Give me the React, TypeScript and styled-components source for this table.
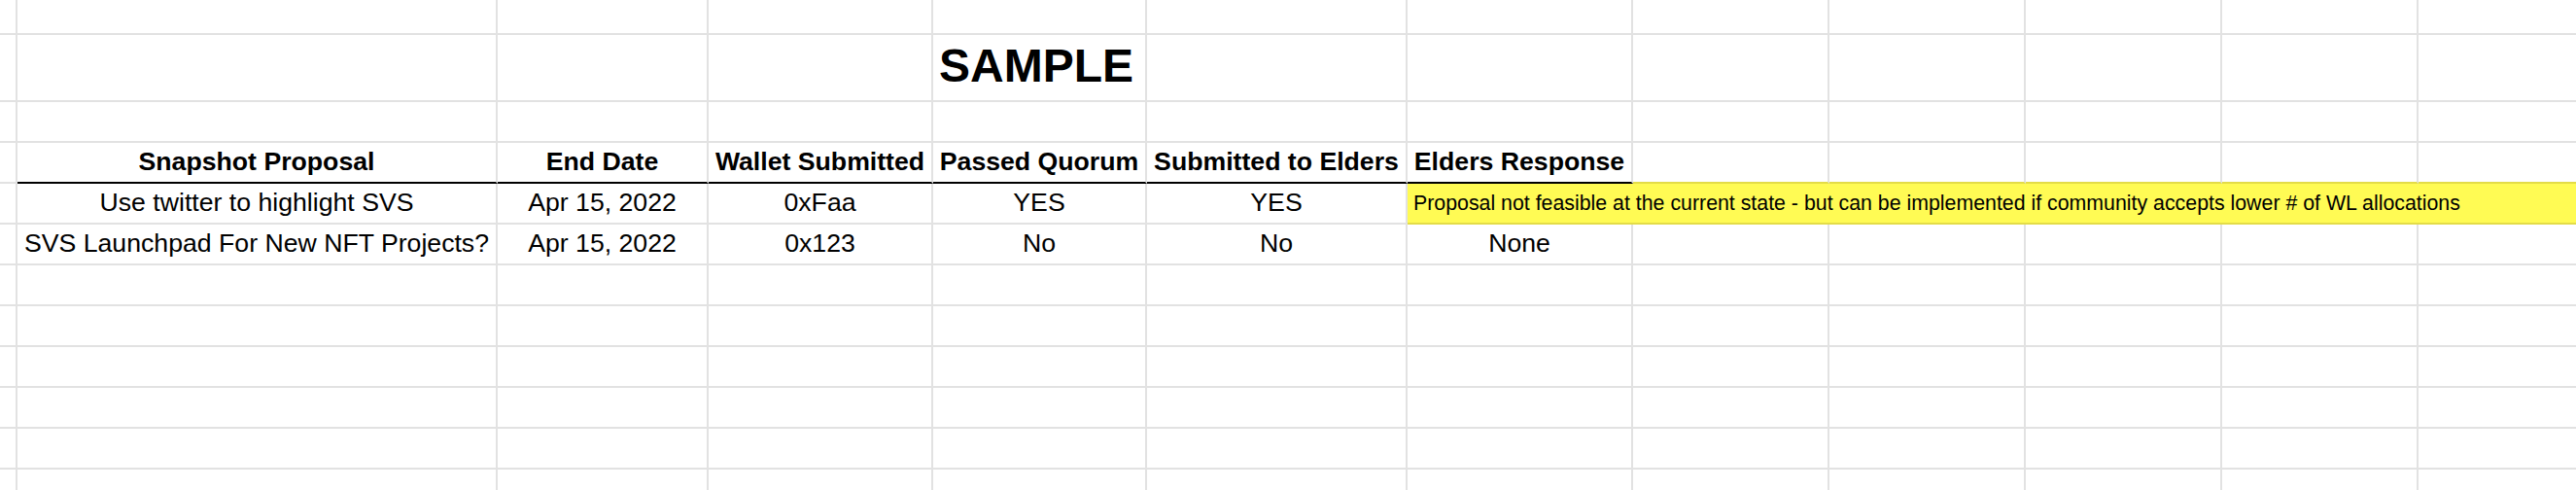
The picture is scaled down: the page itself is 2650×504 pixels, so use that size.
import styled, { createGlobalStyle } from 'styled-components';

const GRID = '#e2e2e2';
const YELLOW = '#fffb54';
const YELLOW_LINE = '#e3dc48';

const COL_WIDTHS = [18, 494, 217, 231, 220, 268, 232, 202, 202, 202, 202, 202];
const ROW_HEIGHTS = [36, 69, 42, 42, 42, 42, 42, 42, 42, 42, 42, 42];

const HEADERS = [
  'Snapshot Proposal',
  'End Date',
  'Wallet Submitted',
  'Passed Quorum',
  'Submitted to Elders',
  'Elders Response',
];

const PROPOSALS = [
  {
    id: 1,
    values: ['Use twitter to highlight SVS', 'Apr 15, 2022', '0xFaa', 'YES', 'YES'],
    response: null,
    note: 'Proposal not feasible at the current state - but can be implemented if community accepts lower # of WL allocations',
  },
  {
    id: 2,
    values: ['SVS Launchpad For New NFT Projects?', 'Apr 15, 2022', '0x123', 'No', 'No'],
    response: 'None',
    note: null,
  },
];

const EMPTY_ROWS = 7;

const GlobalStyle = createGlobalStyle`
  html, body {
    margin: 0;
    padding: 0;
    background: #ffffff;
  }
  body {
    font-family: 'Liberation Sans', Arial, sans-serif;
    color: #000000;
  }
`;

const Page = styled.div`
  width: 2650px;
  height: 504px;
  overflow: hidden;
  background: #ffffff;
`;

const Sheet = styled.div`
  display: grid;
  grid-template-columns: ${COL_WIDTHS.map(w => `${w}px`).join(' ')};
  grid-template-rows: ${ROW_HEIGHTS.map(h => `${h}px`).join(' ')};
  width: max-content;
`;

type Line = 'grid' | 'black' | 'yellow';

const lineColor = (line?: Line) =>
  line === 'black' ? '#000000' : line === 'yellow' ? YELLOW_LINE : GRID;

const Cell = styled.div<{ $align?: 'left' | 'center'; $bold?: boolean; $bottom?: Line }>`
  box-sizing: border-box;
  display: flex;
  align-items: flex-end;
  justify-content: ${p => (p.$align === 'center' ? 'center' : 'flex-start')};
  padding: 0 6px 5px;
  border-right: 2px solid ${GRID};
  border-bottom: 2px solid ${p => lineColor(p.$bottom)};
  font-size: 26.67px;
  font-weight: ${p => (p.$bold ? 700 : 400)};
  white-space: nowrap;
  min-width: 0;
`;

const NoteCell = styled.div`
  box-sizing: border-box;
  grid-column: 7 / -1;
  display: flex;
  align-items: flex-end;
  padding: 0 6px 7px;
  background: ${YELLOW};
  border-bottom: 2px solid ${YELLOW_LINE};
  font-size: 21.33px;
  white-space: nowrap;
`;

const Title = styled.span`
  margin-bottom: 3px;
  font-size: 48px;
  font-weight: 700;
`;

const blankCells = (from: number, bottom?: Line) =>
  COL_WIDTHS.slice(from).map((_, i) => <Cell key={`b${from + i}`} $bottom={bottom} />);

const App = () => {
  return (
    <Page>
      <GlobalStyle />
      <Sheet>
        {/* top partial row */}
        {blankCells(0)}

        {/* title row */}
        <Cell />
        <Cell />
        <Cell />
        <Cell />
        <Cell>
          <Title>SAMPLE</Title>
        </Cell>
        {blankCells(5)}

        {/* spacer row */}
        {blankCells(0)}

        {/* header row */}
        <Cell />
        {HEADERS.map(title => (
          <Cell key={title} $align="center" $bold $bottom="black">
            {title}
          </Cell>
        ))}
        {blankCells(7, 'yellow')}

        {PROPOSALS.map(({ id, values, response, note }) => [
          <Cell key={`${id}-0`} />,
          ...values.map((value, i) => (
            <Cell key={`${id}-v${i}`} $align="center">
              {value}
            </Cell>
          )),
          note ? (
            <NoteCell key={`${id}-note`}>{note}</NoteCell>
          ) : (
            [
              <Cell key={`${id}-r`} $align="center">
                {response}
              </Cell>,
              ...COL_WIDTHS.slice(7).map((_, i) => <Cell key={`${id}-e${i}`} />),
            ]
          ),
        ])}

        {Array.from({ length: EMPTY_ROWS }).map((_, r) =>
          COL_WIDTHS.map((_, c) => <Cell key={`e${r}-${c}`} />)
        )}
      </Sheet>
    </Page>
  );
};

export default App;
